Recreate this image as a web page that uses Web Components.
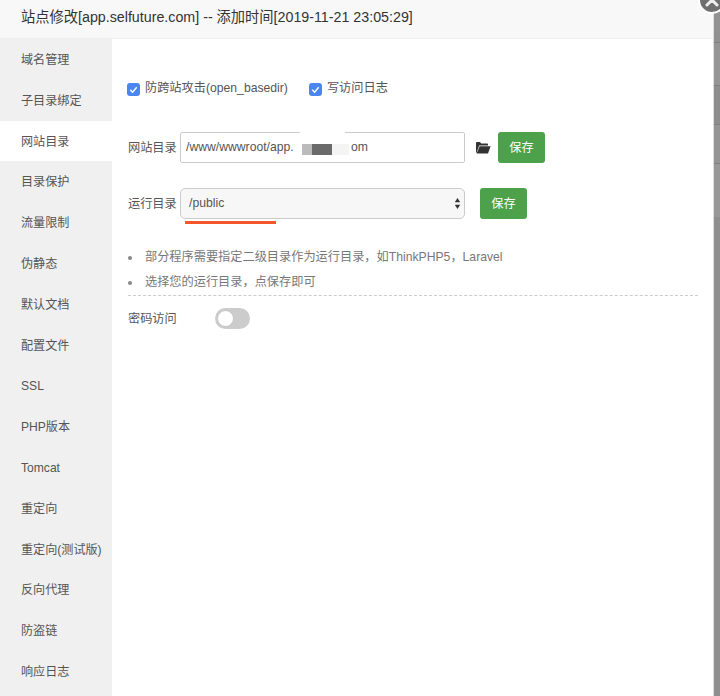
<!DOCTYPE html>
<html lang="zh">
<head>
<meta charset="utf-8">
<title>站点修改</title>
<style>
  html, body { margin: 0; height: 100%; }
  body {
    /* dimmed page behind the dialog, its table rows still show through */
    background: linear-gradient(#919191 0 42px, #7f7f7f 42px 43px, #959595 43px 85px, #7f7f7f 85px 86px, #8d8d8d 86px 124px, #7f7f7f 124px 125px, #949494 125px 163px, #7f7f7f 163px 164px, #989898 164px 217px, #8f8f8f 217px);
    overflow: hidden;
    font-family: "Liberation Sans", "Noto Sans CJK SC", sans-serif;
    color: #555;
  }
</style>
</head>
<body>
<site-dialog heading="站点修改[app.selfuture.com] -- 添加时间[2019-11-21 23:05:29]">
  <side-menu slot="menu" active="网站目录" items="域名管理,子目录绑定,网站目录,目录保护,流量限制,伪静态,默认文档,配置文件,SSL,PHP版本,Tomcat,重定向,重定向(测试版),反向代理,防盗链,响应日志"></side-menu>
  <dir-panel></dir-panel>
</site-dialog>

<script>
// Dialog shell: title bar, left menu, content, close button
class SiteDialog extends HTMLElement {
    constructor() {
        super();
        this.attachShadow({ mode: 'open' });
        this.shadowRoot.innerHTML = `
            <style>
                :host { display: flex; flex-direction: column; width: 714px; height: 696px; background: #fff; position: relative; border-right: 1px solid #ddd; box-sizing: border-box; }
                .title {
                    height: 39px; line-height: 34px; padding-left: 21px; box-sizing: border-box;
                    background: #f8f8f8; border-bottom: 1px solid #eee;
                    font-size: 14.25px; color: #333; white-space: nowrap;
                }
                .body { flex: 1; display: flex; min-height: 0; }
                .close {
                    position: absolute; left: 698px; top: -14px; width: 24px; height: 24px;
                    border-radius: 50%; background: #6f6f6f; border: 2px solid #fff;
                }
                .close svg { display: block; }
            </style>
            <div class="title"></div>
            <div class="body"><slot name="menu"></slot><slot></slot></div>
            <div class="close">
                <svg width="24" height="24" viewBox="0 0 24 24"><path d="M7 7l10 10M17 7L7 17" stroke="#eee" stroke-width="3" stroke-linecap="round"/></svg>
            </div>
        `;
        this.shadowRoot.querySelector('.title').textContent = this.getAttribute('heading');
    }
}
customElements.define('site-dialog', SiteDialog);

class SideMenu extends HTMLElement {
    constructor() {
        super();
        this.attachShadow({ mode: 'open' });
        const active = this.getAttribute('active');
        const rows = this.getAttribute('items').split(',').map(name =>
            `<div class="item${name === active ? ' on' : ''}">${name}</div>`).join('');
        this.shadowRoot.innerHTML = `
            <style>
                :host { display: block; width: 112px; flex: none; background: #f0f0f0; overflow: hidden; }
                .item { height: 40.8px; line-height: 43px; padding-left: 21px; font-size: 12.1px; color: #555; white-space: nowrap; }
                .on { background: #fff; }
            </style>
            ${rows}
        `;
    }
}
customElements.define('side-menu', SideMenu);

class CheckBox extends HTMLElement {
    constructor() {
        super();
        this.attachShadow({ mode: 'open' });
        this.shadowRoot.innerHTML = `
            <style>
                :host { display: inline-flex; align-items: center; gap: 5px; color: #555; }
                .box { width: 13px; height: 13px; border-radius: 3px; background: #4a86f0; display: block; margin: 5px 0 0 -1px; }
            </style>
            <svg class="box" viewBox="0 0 13 13"><path d="M3.3 6.8l2.3 2.4 4.1-5" fill="none" stroke="#fff" stroke-width="1.4"/></svg>
            <slot></slot>
        `;
    }
}
customElements.define('check-box', CheckBox);

class SaveButton extends HTMLElement {
    constructor() {
        super();
        this.attachShadow({ mode: 'open' });
        this.shadowRoot.innerHTML = `
            <style>
                :host {
                    display: block; width: 47px; height: 31px; line-height: 32px; text-align: center;
                    background: #4da14a; border-radius: 3px; color: #fff; font-size: 12.2px;
                }
            </style>
            <slot></slot>
        `;
    }
}
customElements.define('save-button', SaveButton);

// The panel for 网站目录
class DirPanel extends HTMLElement {
    constructor() {
        super();
        this.attachShadow({ mode: 'open' });
        this.shadowRoot.innerHTML = `
            <style>
                :host { display: block; flex: 1; padding: 39px 0 0 16px; font-size: 12.2px; color: #555; min-width: 0; }
                .checks { display: flex; gap: 22px; height: 18px; align-items: center; }
                .row { display: flex; align-items: center; height: 31px; position: relative; }
                .row label { width: 52px; flex: none; padding-bottom: 2px; }
                .field {
                    box-sizing: border-box; width: 285px; height: 31px; border: 1px solid #ccc; border-radius: 2px;
                    padding-bottom: 2px; display: flex; align-items: center; position: relative;
                }
                .path { padding-left: 5px; background: #fff; }
                .select { padding-left: 8px; background: #f7f7f7; border-radius: 5px; }
                .arrows { position: absolute; right: 3px; top: 9px; display: block; }
                /* the mosaic that hides part of the domain */
                .gap { position: absolute; left: 119px; top: -2px; width: 45px; height: 5px; background: #fff; }
                .mosaic { position: absolute; top: 11px; height: 11px; display: block; }
                .om { position: absolute; left: 170px; }
                .folder { margin: 0 7px 0 10px; display: block; }
                .underline { position: absolute; left: 57px; top: 33px; width: 91px; height: 3px; background: #f4552a; }
                ul { list-style: none; margin: 26px 0 0; padding: 0; color: #777; }
                li { height: 24.5px; line-height: 24.5px; padding-left: 17px; position: relative; }
                li::before { content: ""; position: absolute; left: 0; top: 11px; width: 4px; height: 4px; border-radius: 50%; background: #888; }
                .dash { border-top: 1px dashed #ccc; width: 570px; margin-top: 1px; }
                .pass { display: flex; align-items: center; height: 44px; }
                .pass span { width: 87px; flex: none; }
                .switch { width: 35px; height: 21px; border-radius: 11px; background: #ccc; position: relative; }
                .switch::after {
                    content: ""; position: absolute; left: 2px; top: 2px; width: 15px; height: 15px; border-radius: 50%;
                    background: #fff; border: 1px solid #c4c4c4;
                }
            </style>
            <div class="checks">
                <check-box>防跨站攻击(open_basedir)</check-box>
                <check-box>写访问日志</check-box>
            </div>
            <div class="row" style="margin-top:36px">
                <label>网站目录</label>
                <div class="field path">/www/wwwroot/app.
                    <span class="gap"></span>
                    <i class="mosaic" style="left:121px;width:10px;background:#bbb"></i>
                    <i class="mosaic" style="left:131px;width:20px;background:#6a6a6a"></i>
                    <i class="mosaic" style="left:151px;width:17px;background:#f4f4f4"></i>
                    <span class="om">om</span>
                </div>
                <svg class="folder" width="16" height="13" viewBox="0 0 16 13">
                    <path d="M1 12V2.2C1 1.5 1.4 1 2 1h3l1.2 1.4H12c.6 0 1 .4 1 1V4.4H4.2L1.6 11.6z" fill="#333"/>
                    <path d="M1.6 12.4L4.6 5.2H15.6L13 12.4z" fill="#333"/>
                </svg>
                <save-button>保存</save-button>
            </div>
            <div class="row" style="margin-top:25px">
                <label>运行目录</label>
                <div class="field select">/public
                    <svg class="arrows" width="7" height="11" viewBox="0 0 7 11"><path d="M3.5 0L6.2 4.2H.8zM3.5 11L.8 6.8h5.4z" fill="#333"/></svg>
                </div>
                <div class="underline"></div>
                <save-button style="margin-left:15px">保存</save-button>
            </div>
            <ul>
                <li>部分程序需要指定二级目录作为运行目录，如ThinkPHP5，Laravel</li>
                <li>选择您的运行目录，点保存即可</li>
            </ul>
            <div class="dash"></div>
            <div class="pass">
                <span>密码访问</span>
                <div class="switch"></div>
            </div>
        `;
    }
}
customElements.define('dir-panel', DirPanel);
</script>
</body>
</html>
